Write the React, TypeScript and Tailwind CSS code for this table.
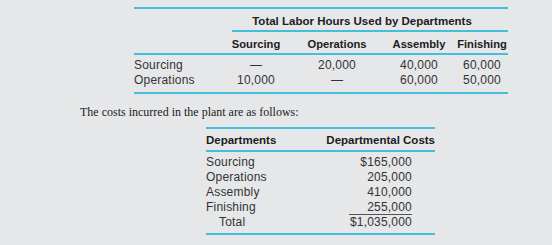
const rule = "h-[2px] bg-[#47bdda]";

const hours = [
  { name: "Sourcing", values: ["—", "20,000", "40,000", "60,000"] },
  { name: "Operations", values: ["10,000", "—", "60,000", "50,000"] },
];

const costs = [
  { name: "Sourcing", amount: "$165,000" },
  { name: "Operations", amount: "205,000" },
  { name: "Assembly", amount: "410,000" },
];

export default function App() {
  return (
    <div className="min-h-[245px] w-[552px] bg-[#e6e7e9] pt-[7px] font-['Liberation_Sans',Arial,sans-serif] text-[12px] text-[#333]">
      {/* labor hours table */}
      <div className="ml-[134px] w-[374px]">
        <div className={rule} />
        <div className="grid grid-cols-[92px_60px_102px_62px_58px]">
          <div />
          <div className="col-span-4 ml-[6px] border-b-2 border-[#47bdda] pt-[5px] pr-[16px] pb-[2px] text-center text-[11.5px] leading-[14px] font-bold text-[#1c1c1c]">
            Total Labor Hours Used by Departments
          </div>
        </div>
        <div className="grid grid-cols-[92px_60px_102px_62px_58px] border-b-2 border-[#47bdda] pt-[5px] pb-[2px] text-center text-[11.2px] leading-[14px] font-bold text-[#1c1c1c]">
          <div />
          <div>Sourcing</div>
          <div>Operations</div>
          <div>Assembly</div>
          <div className="pl-[6px]">Finishing</div>
        </div>
        <div className="border-b-2 border-[#47bdda] pt-[3px] pb-[4px] leading-[15px] tracking-[0.2px]">
          {hours.map((row) => (
            <div key={row.name} className="grid grid-cols-[92px_60px_102px_62px_58px] text-center">
              <div className="text-left">{row.name}</div>
              <div>{row.values[0]}</div>
              <div>{row.values[1]}</div>
              <div>{row.values[2]}</div>
              <div className="pl-[6px]">{row.values[3]}</div>
            </div>
          ))}
        </div>
      </div>

      <p className="mt-[10px] ml-[80px] font-['Liberation_Serif','Times_New_Roman',serif] text-[12px] leading-[16px] text-[#222]">
        The costs incurred in the plant are as follows:
      </p>

      {/* departmental costs table */}
      <div className="mt-[7px] ml-[206px] w-[229px]">
        <div className={rule} />
        <div className="flex justify-between border-b-2 border-[#47bdda] pt-[4px] pb-[3px] text-[11.5px] leading-[14px] font-bold text-[#1c1c1c]">
          <span>Departments</span>
          <span>Departmental Costs</span>
        </div>
        <div className="border-b-2 border-[#47bdda] pt-[3px] pb-[3px] pr-[23px] leading-[15px] tracking-[0.2px]">
          {costs.map((row) => (
            <div key={row.name} className="flex justify-between">
              <span>{row.name}</span>
              <span>{row.amount}</span>
            </div>
          ))}
          <div className="flex h-[15px] justify-between">
            <span>Finishing</span>
            <span className="w-[63px] border-b border-[#555] text-right leading-[14px]">255,000</span>
          </div>
          <div className="flex justify-between">
            <span className="pl-[13px]">Total</span>
            <span>$1,035,000</span>
          </div>
        </div>
      </div>
    </div>
  );
}
